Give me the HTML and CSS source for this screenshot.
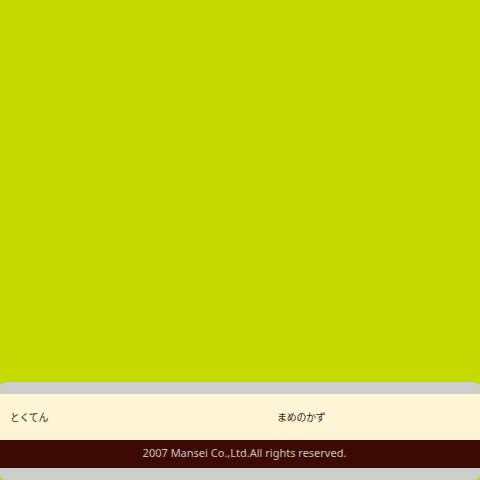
FILE: index.html
```html
<!DOCTYPE html>
<html lang="ja">
<head>
<meta charset="utf-8">
<link rel="stylesheet" href="styles.css">
</head>
<body>
<div class="page">
  <main class="stage"></main>
  <footer class="footer">
    <div class="cap-top"></div>
    <nav class="menu">
      <span class="menu-item">とくてん</span>
      <span class="menu-item">まめのかず</span>
    </nav>
    <div class="copy">2007 Mansei Co.,Ltd.All rights reserved.</div>
    <div class="cap-bottom"></div>
  </footer>
</div>
</body>
</html>
```
FILE: styles.css
```css
html, body {
  margin: 0;
  padding: 0;
  background: #c4da00;
}
.page {
  width: 480px;
  height: 480px;
  display: flex;
  flex-direction: column;
}
.stage {
  flex: 1;
  background: #c4da00;
}
.footer {
  display: flex;
  flex-direction: column;
}
.cap-top {
  height: 12px;
  background: #cccfcc;
  border-top-left-radius: 9px 4px;
  border-top-right-radius: 9px 4px;
}
.menu {
  height: 46px;
  background: #fff6d6;
  display: grid;
  grid-template-columns: 267px 1fr;
  align-items: center;
  padding-left: 10px;
  padding-bottom: 1px;
  box-sizing: border-box;
  font-family: "Noto Sans CJK JP", sans-serif;
  font-size: 10px;
  letter-spacing: -0.3px;
  color: #3a1a10;
}
.copy {
  height: 28px;
  box-sizing: border-box;
  padding: 0 0 3px 9px;
  background: #3c0a02;
  color: #cdc4bc;
  font-family: "Noto Sans", sans-serif;
  font-size: 11px;
  display: flex;
  align-items: center;
  justify-content: center;
}
.cap-bottom {
  height: 12px;
  background: #cccfcc;
  border-bottom-left-radius: 6px 4px;
  border-bottom-right-radius: 6px 4px;
}
```
